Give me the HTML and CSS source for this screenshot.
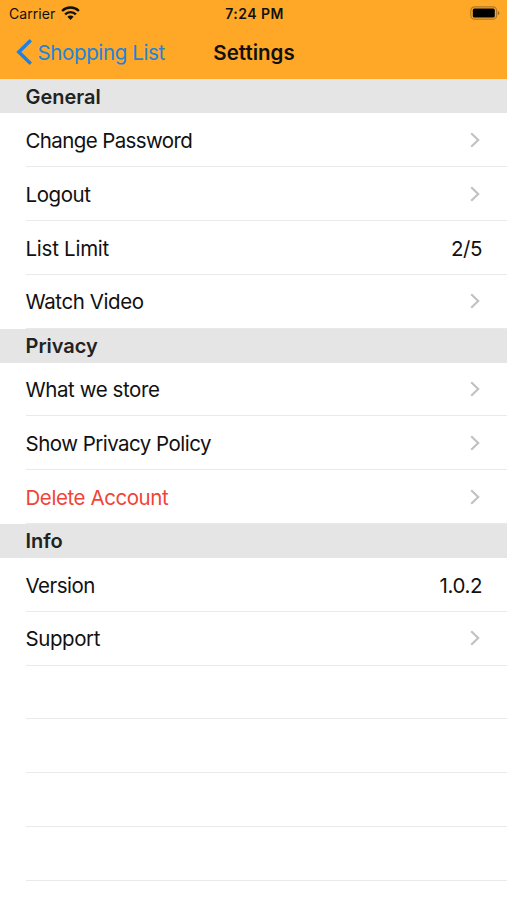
FILE: index.html
```html
<!DOCTYPE html>
<html lang="en">
<head>
<meta charset="utf-8">
<title>Settings</title>
<link rel="stylesheet" href="styles.css">
</head>
<body>
<svg width="0" height="0" class="defs"><symbol id="chev" viewBox="0 0 10 16"><path d="M1.2 1.2 8.2 8l-7 6.8" fill="none" stroke="#c2c2c5" stroke-width="2.2"/></symbol></svg>
<header>
  <div class="status">
    <div class="carrier"><span>Carrier</span>
      <svg width="19" height="14" viewBox="0 0 19 14"><path d="M1.1 5a12 12 0 0 1 16.8 0M4.1 8.3a7.7 7.7 0 0 1 10.8 0" fill="none" stroke="#111" stroke-width="2.4"/><path d="M9.5 14 6.4 10.7a4.4 4.4 0 0 1 6.2 0z" fill="#111"/></svg>
    </div>
    <span class="time">7:24 PM</span>
    <svg class="battery" width="30" height="14" viewBox="0 0 30 14"><rect x=".8" y=".8" width="25.8" height="12.4" rx="3.8" fill="none" stroke="#b0782a" stroke-width="1.2"/><rect x="2.8" y="2.6" width="22" height="8.9" rx="1.6" fill="#000"/><path d="M27.8 4.7q3.4 2.3 0 4.6z" fill="#a06c22"/></svg>
  </div>
  <nav>
    <a class="back"><svg width="17" height="28" viewBox="0 0 17 28"><path d="M14.8 2.3 2.8 14l12 11.7" fill="none" stroke="#1f80e4" stroke-width="3.5"/></svg><span>Shopping List</span></a>
    <h1>Settings</h1>
  </nav>
</header>
<main>
  <h2>General</h2>
  <ul>
    <li><span class="tighter">Change Password</span><svg class="chev"><use href="#chev"/></svg></li>
    <li><span>Logout</span><svg class="chev"><use href="#chev"/></svg></li>
    <li><span class="loose">List Limit</span><span class="value">2/5</span></li>
    <li><span>Watch Video</span><svg class="chev"><use href="#chev"/></svg></li>
  </ul>
  <h2>Privacy</h2>
  <ul>
    <li><span>What we store</span><svg class="chev"><use href="#chev"/></svg></li>
    <li><span class="tight">Show Privacy Policy</span><svg class="chev"><use href="#chev"/></svg></li>
    <li class="danger"><span>Delete Account</span><svg class="chev"><use href="#chev"/></svg></li>
  </ul>
  <h2>Info</h2>
  <ul>
    <li><span class="tight">Version</span><span class="value">1.0.2</span></li>
    <li><span>Support</span><svg class="chev"><use href="#chev"/></svg></li>
    <li></li><li></li><li></li><li></li>
  </ul>
</main>
</body>
</html>
```
FILE: styles.css
```css
* { box-sizing: border-box; }
body { margin: 0; height: 900px; overflow: hidden; background: #fff; color: #111; font-family: Inter, "Liberation Sans", sans-serif; }
.defs { position: absolute; }
header { height: 79.4px; background: #ffa827; }
.status { display: grid; grid-template-columns: 1fr auto 1fr; align-items: center; height: 26px; padding: 0 7px 0 9px; font-size: 14px; line-height: 18px; }
.carrier { display: flex; align-items: center; gap: 5.5px; letter-spacing: .05px; }
.carrier span, .time { padding-top: 2px; }
.time { font-weight: 600; letter-spacing: .45px; }
.battery { justify-self: end; }
nav { display: grid; grid-template-columns: 1fr auto 1fr; align-items: center; height: 52px; padding: 0 15.5px; }
.back { display: flex; align-items: center; gap: 5px; color: #2583d8; font-size: 20.5px; letter-spacing: -.37px; white-space: nowrap; }
h1 { margin: 0; padding-left: 1px; font-size: 20.5px; font-weight: 600; letter-spacing: 0; }
h2 { display: flex; align-items: center; height: 34px; margin: 0; padding: 1px 0 0 25.5px; background: #e5e5e5; color: #222; font-size: 20px; font-weight: 600; letter-spacing: 0; }
ul { margin: 0; padding: 0 0 0 26px; list-style: none; }
li { display: flex; align-items: center; justify-content: space-between; height: 53.8px; padding: 1.4px 25px 0 0; border-bottom: 1px solid #e9e9ea; font-size: 20.5px; letter-spacing: -.42px; }
li > span:first-child { margin-left: -.5px; }
.loose { letter-spacing: -.25px; }
.tight { letter-spacing: -.52px; }
.tighter { letter-spacing: -.62px; }
.chev { width: 10px; height: 16px; margin: 0 2px 1px 0; }
.danger { color: #f04438; }
```
